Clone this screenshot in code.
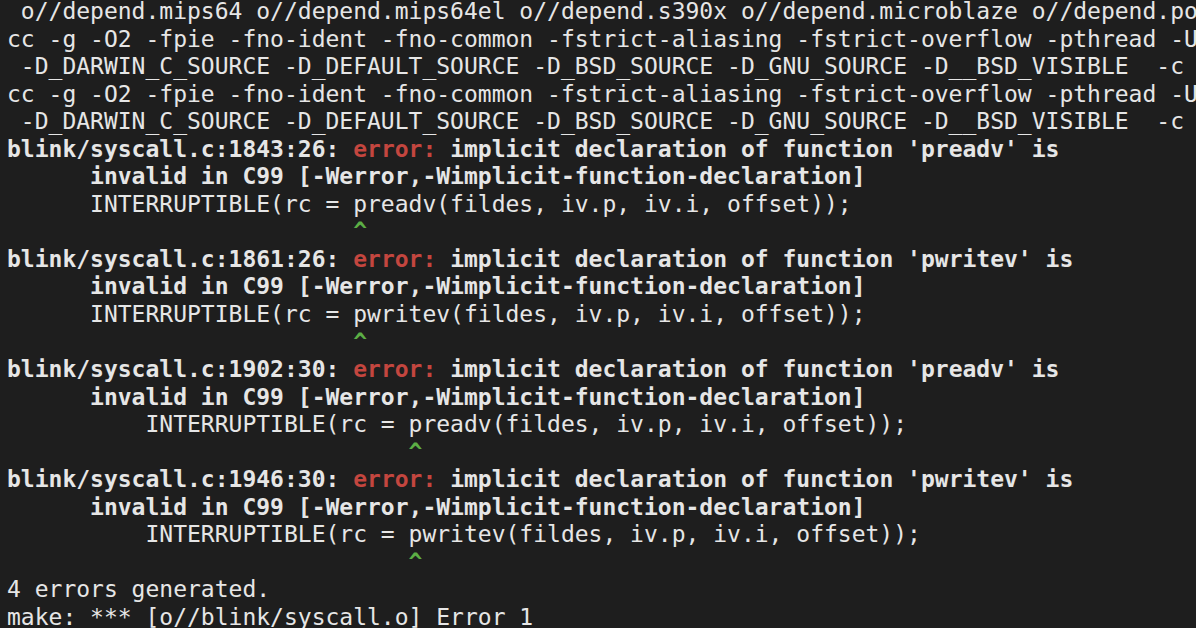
import React from "react";

type Seg = { t: string; c?: "err" | "caret"; b?: boolean };
type Line = Seg[];

const P = (t: string): Line => [{ t }];
const B = (t: string): Line => [{ t, b: true }];
const ERR = (loc: string, fn: string): Line => [
  { t: `blink/syscall.c:${loc}: `, b: true },
  { t: "error:", c: "err", b: true },
  { t: ` implicit declaration of function '${fn}' is`, b: true },
];
const CARET = (n: number): Line => [{ t: " ".repeat(n) }, { t: "^", c: "caret", b: true }];

const cc = "cc -g -O2 -fpie -fno-ident -fno-common -fstrict-aliasing -fstrict-overflow -pthread -U";
const dd = " -D_DARWIN_C_SOURCE -D_DEFAULT_SOURCE -D_BSD_SOURCE -D_GNU_SOURCE -D__BSD_VISIBLE  -c";
const inv = "      invalid in C99 [-Werror,-Wimplicit-function-declaration]";

const lines: Line[] = [
  P(" o//depend.mips64 o//depend.mips64el o//depend.s390x o//depend.microblaze o//depend.po"),
  P(cc),
  P(dd),
  P(cc),
  P(dd),
  ERR("1843:26", "preadv"),
  B(inv),
  P("      INTERRUPTIBLE(rc = preadv(fildes, iv.p, iv.i, offset));"),
  CARET(25),
  ERR("1861:26", "pwritev"),
  B(inv),
  P("      INTERRUPTIBLE(rc = pwritev(fildes, iv.p, iv.i, offset));"),
  CARET(25),
  ERR("1902:30", "preadv"),
  B(inv),
  P("          INTERRUPTIBLE(rc = preadv(fildes, iv.p, iv.i, offset));"),
  CARET(29),
  ERR("1946:30", "pwritev"),
  B(inv),
  P("          INTERRUPTIBLE(rc = pwritev(fildes, iv.p, iv.i, offset));"),
  CARET(29),
  P("4 errors generated."),
  P("make: *** [o//blink/syscall.o] Error 1"),
];

export default function App() {
  return (
    <div className="w-[1196px] h-[628px] overflow-hidden bg-[#1e1e1e]">
      <div
        className="pl-[7px] -mt-[2px] text-[23px] leading-[27.55px] text-[#e6e6e6] whitespace-pre"
        style={{ fontFamily: '"DejaVu Sans Mono", "Liberation Mono", monospace' }}
      >
        {lines.map((l, i) => (
          <div key={i} className="h-[27.55px]">
            {l.map((s, j) => (
              <span
                key={j}
                className={
                  (s.b ? "font-bold " : "font-normal ") +
                  (s.c === "err"
                    ? "text-[#c4463f]"
                    : s.c === "caret"
                    ? "text-[#5cae45]"
                    : "")
                }
              >
                {s.t}
              </span>
            ))}
          </div>
        ))}
      </div>
    </div>
  );
}
